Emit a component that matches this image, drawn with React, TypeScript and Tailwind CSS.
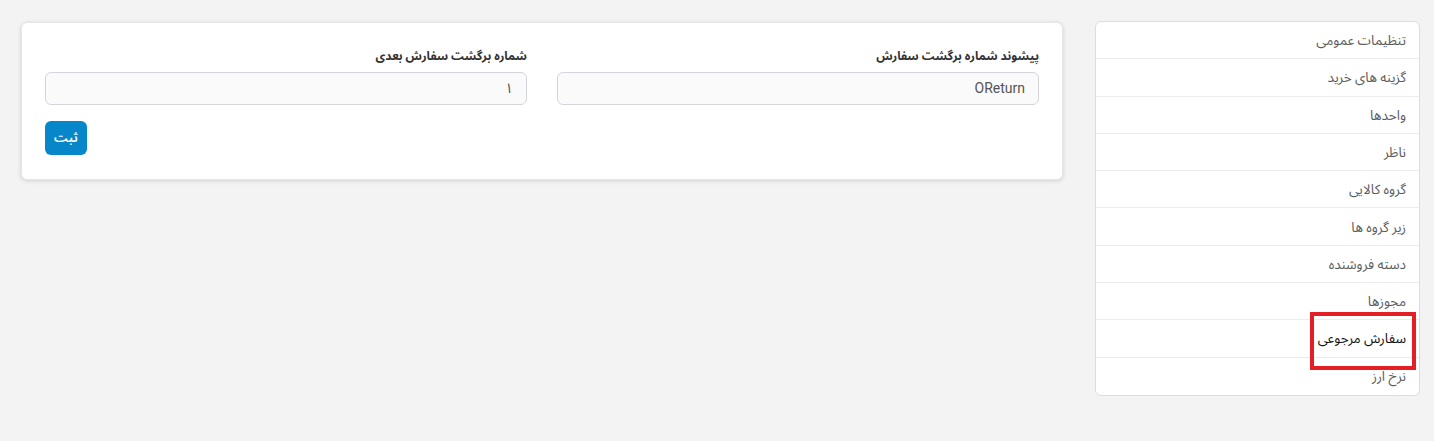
import React from 'react';

const items = [
  'تنظیمات عمومی',
  'گزینه های خرید',
  'واحدها',
  'ناظر',
  'گروه کالایی',
  'زیر گروه ها',
  'دسته فروشنده',
  'مجوزها',
  'سفارش مرجوعی',
  'نرخ ارز',
];

const ACTIVE = 'سفارش مرجوعی';

const Sidebar: React.FC = () => (
  <div className="w-[325px] shrink-0 bg-white border border-[#dcdde1] rounded-md">
    {items.map((label, i) => (
      <div
        key={label}
        className={`relative flex items-center h-[37.3px] pr-[13px] text-[13.5px] ${
          i < items.length - 1 ? 'border-b border-[#ececec]' : ''
        } ${label === ACTIVE ? 'text-[#111]' : 'text-[#5c5c5c]'}`}
      >
        {label}
        {label === ACTIVE && (
          <div className="absolute right-[3px] top-[-8px] w-[106px] h-[58px] border-4 border-[#e31e24]" />
        )}
      </div>
    ))}
  </div>
);

const Field: React.FC<{ label: string; value: string }> = ({ label, value }) => (
  <div className="flex-1 flex flex-col">
    <label className="h-[20px] leading-[20px] text-[12px] font-bold text-[#333] mb-[6px]">{label}</label>
    <div className="h-[33px] flex items-center px-[13px] bg-[#fafafa] border border-[#d5d5de] rounded-md text-[14px] text-[#555]">
      {value}
    </div>
  </div>
);

const App: React.FC = () => {
  return (
    <div
      dir="rtl"
      className="min-h-[441px] bg-[#f3f3f3] flex items-start gap-[32px] pr-[14px] pl-[21px] pt-[21px]"
      style={{ fontFamily: "Roboto, 'Noto Sans Arabic', 'DejaVu Sans', sans-serif" }}
    >
      <Sidebar />
      <div className="flex-1 mt-px bg-white rounded-md border border-[#e6e6e6] shadow-[0_1px_4px_rgba(0,0,0,0.15)] pt-[23px] pb-[24px] px-[23px]">
        <div className="flex gap-[30px]">
          <Field label="پیشوند شماره برگشت سفارش" value="OReturn" />
          <Field label="شماره برگشت سفارش بعدی" value="۱" />
        </div>
        <div className="flex justify-end mt-[16px]">
          <button className="h-[34px] w-[42px] rounded-md bg-[#0787c9] text-white text-[13px] font-semibold">ثبت</button>
        </div>
      </div>
    </div>
  );
};

export default App;
